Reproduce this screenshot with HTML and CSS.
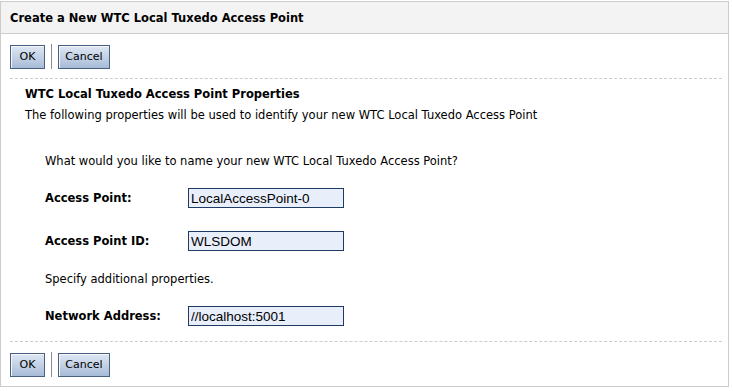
FILE: index.html
```html
<!DOCTYPE html>
<html>
<head>
<meta charset="utf-8">
<title>Create a New WTC Local Tuxedo Access Point</title>
<link rel="stylesheet" href="styles.css">
</head>
<body>
<div class="panel">
  <div class="panel-header">Create a New WTC Local Tuxedo Access Point</div>
  <div class="button-bar">
    <button class="btn btn-ok" type="button">OK</button>
    <span class="btn-sep"></span>
    <button class="btn btn-cancel" type="button">Cancel</button>
  </div>
  <div class="dash"></div>
  <div class="section">
    <div class="section-title">WTC Local Tuxedo Access Point Properties</div>
    <div class="section-desc">The following properties will be used to identify your new WTC Local Tuxedo Access Point</div>
  </div>
  <div class="form">
    <div class="prompt prompt-first">What would you like to name your new WTC Local Tuxedo Access Point?</div>
    <div class="field field-1">
      <label class="field-label">Access Point:</label>
      <input class="field-input" type="text" value="LocalAccessPoint-0">
    </div>
    <div class="field field-2">
      <label class="field-label">Access Point ID:</label>
      <input class="field-input" type="text" value="WLSDOM">
    </div>
    <div class="prompt prompt-second">Specify additional properties.</div>
    <div class="field field-3">
      <label class="field-label">Network Address:</label>
      <input class="field-input" type="text" value="//localhost:5001">
    </div>
  </div>
  <div class="dash dash-bottom"></div>
  <div class="button-bar button-bar-bottom">
    <button class="btn btn-ok" type="button">OK</button>
    <span class="btn-sep"></span>
    <button class="btn btn-cancel" type="button">Cancel</button>
  </div>
</div>
</body>
</html>
```
FILE: styles.css
```css
html, body {
  margin: 0;
  padding: 0;
  background: #ffffff;
}

body {
  font-family: "DejaVu Sans", Verdana, sans-serif;
  font-size: 11.5px;
  color: #000000;
}

.panel {
  margin-top: 1px;
  width: 729px;
  box-sizing: border-box;
  border: 1px solid #cccccc;
  padding-bottom: 9px;
}

.panel-header {
  height: 31px;
  background: #f3f3f3;
  border-bottom: 1px solid #cccccc;
  display: flex;
  align-items: center;
  padding-left: 9px;
  font-weight: bold;
  font-size: 11.5px;
  color: #000000;
}

.button-bar {
  display: flex;
  align-items: center;
  padding: 10px 0 0 9px;
}

.button-bar-bottom {
  padding-top: 10px;
}

.btn {
  height: 24px;
  box-sizing: border-box;
  margin: 0;
  padding: 0;
  font-family: "DejaVu Sans", Verdana, sans-serif;
  font-size: 11px;
  color: #000000;
  border: 1px solid #4a6082;
  border-radius: 0;
  background: linear-gradient(to bottom, #dfe7f2 0%, #c6d4e7 45%, #a7bbd7 100%);
  box-shadow: inset 1px 1px 0 #f2f6fb;
}

.btn-ok {
  width: 35px;
}

.btn-cancel {
  width: 52px;
}

.btn-sep {
  width: 1px;
  height: 25px;
  background: #8c8c8c;
  margin: 0 6px 0 6px;
}

.dash {
  margin: 9px 6px 0 9px;
  border-top: 1px dashed #cccccc;
  height: 0;
}

.section {
  padding: 8px 0 0 24px;
}

.section-title {
  font-weight: bold;
  line-height: 14px;
}

.section-desc {
  margin-top: 7px;
  line-height: 14px;
}

.form {
  padding: 32px 0 0 44px;
}

.prompt {
  line-height: 14px;
}

.field {
  display: flex;
  align-items: center;
}

.field-1 {
  margin-top: 20px;
}

.field-2 {
  margin-top: 23px;
}

.prompt-second {
  margin-top: 21px;
}

.field-3 {
  margin-top: 20px;
}

.field-label {
  width: 143px;
  font-weight: bold;
}

.field-input {
  width: 156px;
  height: 20px;
  box-sizing: border-box;
  margin: 0;
  padding: 0 0 0 2px;
  border: 1px solid #1e3a66;
  border-radius: 0;
  background: #e8eefa;
  font-family: "Liberation Sans", Arial, sans-serif;
  font-size: 13.5px;
  color: #000000;
  outline: none;
}

.dash-bottom {
  margin-top: 15px;
}
```
